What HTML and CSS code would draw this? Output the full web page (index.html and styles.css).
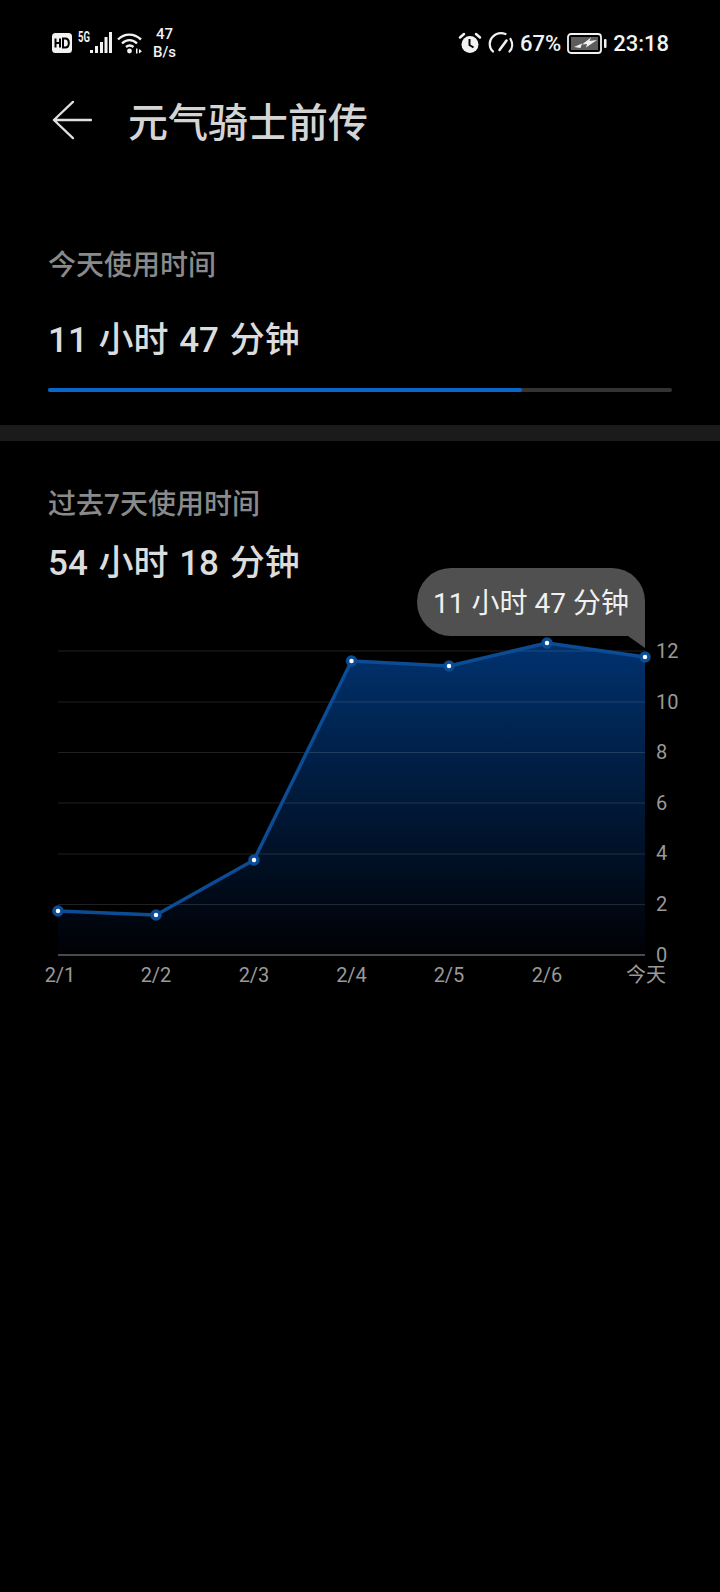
FILE: index.html
```html
<!DOCTYPE html>
<html>
<head>
    <title>元气骑士前传</title>
    <link rel="stylesheet" href="styles.css">
</head>
<body>
    <div class="status-bar">
        <div class="status-left">
            <svg class="icon-hd" width="20" height="20" viewBox="0 0 20 20">
                <rect width="20" height="20" rx="3.5" fill="#f2f2f2"/>
                <path d="M3.5 5.5v9M8 5.5v9M3.5 10H8M11 5.5v9h2.2c2.4 0 3.6-1.8 3.6-4.5s-1.2-4.5-3.6-4.5z" fill="none" stroke="#000" stroke-width="2"/>
            </svg>
            <span class="net-type">5G</span>
            <svg class="icon-signal" width="22" height="22" viewBox="0 0 22 22" fill="#f2f2f2">
                <rect x="0" y="18" width="3" height="3"/>
                <rect x="5" y="14" width="3" height="7"/>
                <rect x="10" y="10" width="3" height="11"/>
                <rect x="14.500" y="5" width="3" height="16"/>
                <rect x="19" y="0" width="3" height="21"/>
            </svg>
            <svg class="icon-wifi" width="26" height="22" viewBox="0 0 26 22">
                <path d="M1 7.500C7.500 1 17 1 24 7.500M5 11.500C9.500 7 15.500 7 20 11.500M9 15c2.500-2 5-2 7.500 0" fill="none" stroke="#f2f2f2" stroke-width="2.400"/>
                <circle cx="12.500" cy="19" r="2.400" fill="#f2f2f2"/>
                <path d="M19 16.500h1.500v5H19zM22 17l3 2.200-3 2.200z" fill="#f2f2f2"/>
            </svg>
            <div class="net-speed">
                <span>47</span>
                <span>B/s</span>
            </div>
        </div>
        <div class="status-right">
            <svg class="icon-alarm" width="24" height="24" viewBox="0 0 24 24">
                <circle cx="12" cy="13.500" r="8.500" fill="#f2f2f2"/>
                <path d="M11.500 8v6l4 2.500" fill="none" stroke="#000" stroke-width="2"/>
                <path d="M2 6.500 6 3M22 6.500 18 3" fill="none" stroke="#f2f2f2" stroke-width="2.500" stroke-linecap="round"/>
            </svg>
            <svg class="icon-gauge" width="26" height="24" viewBox="0 0 26 24" fill="none" stroke="#f2f2f2" stroke-width="2.200" stroke-linecap="round">
                <path d="M5 20.500C1 17 0.500 10 4.500 6 8.500 2 13 1.500 17.500 3"/>
                <path d="M22.500 8C25 12.500 24.500 17.500 21.500 20.500"/>
                <path d="M11.500 19 18.500 9.500" stroke-width="2.600"/>
            </svg>
            <span class="battery-pct">67%</span>
            <svg class="icon-battery" width="40" height="21" viewBox="0 0 40 21">
                <rect x="1" y="1" width="33" height="19" rx="3" fill="none" stroke="#f2f2f2" stroke-width="1.800"/>
                <rect x="4" y="4" width="27" height="13" fill="#5c5c5c"/>
                <path d="M7 14 15 10.500 13.500 15zM15 11.500 24 4.500 22.500 8 30 7 19 14.500 20 11z" fill="#f2f2f2"/>
                <rect x="37" y="6" width="2.500" height="9" rx="1" fill="#f2f2f2"/>
            </svg>
            <span class="clock">23:18</span>
        </div>
    </div>

    <div class="title-bar">
        <svg class="icon-back" width="40" height="40" viewBox="0 0 42 42">
            <path d="M22 2 2 21l20 19M2 21h39" fill="none" stroke="#e0e0e0" stroke-width="2.400" stroke-linecap="round" stroke-linejoin="round"/>
        </svg>
        <h1>元气骑士前传</h1>
    </div>

    <section class="today">
        <p class="label">今天使用时间</p>
        <p class="value">11 小时 47 分钟</p>
        <div class="progress">
            <div class="progress-fill" style="width: 76%"></div>
        </div>
    </section>

    <div class="divider"></div>

    <section class="week">
        <p class="label">过去7天使用时间</p>
        <p class="value">54 小时 18 分钟</p>
    </section>

    <svg class="chart" width="720" height="430" viewBox="0 0 720 430">
        <defs>
            <linearGradient id="area" x1="0" y1="0" x2="0" y2="1">
                <stop offset="0" stop-color="#00326f"/>
                <stop offset="1" stop-color="#000104"/>
            </linearGradient>
        </defs>
        <!-- svg origin is at y=565 on the page -->
        <path d="M58 346 156 350 254 295 351.500 96 449 101 547 78 645 92V390H58z" fill="url(#area)"/>
        <g class="grid">
            <line x1="58" x2="645" y1="86" y2="86"/>
            <line x1="58" x2="645" y1="137" y2="137"/>
            <line x1="58" x2="645" y1="187.500" y2="187.500"/>
            <line x1="58" x2="645" y1="238" y2="238"/>
            <line x1="58" x2="645" y1="289" y2="289"/>
            <line x1="58" x2="645" y1="339.500" y2="339.500"/>
            <line class="baseline" x1="58" x2="645" y1="390" y2="390"/>
        </g>
        <path class="line" d="M58 346 156 350 254 295 351.500 96 449 101 547 78 645 92"/>
        <g class="dots">
            <circle cx="58" cy="346" r="4"/>
            <circle cx="156" cy="350" r="4"/>
            <circle cx="254" cy="295" r="4"/>
            <circle cx="351.500" cy="96" r="4"/>
            <circle cx="449" cy="101" r="4"/>
            <circle cx="547" cy="78" r="4"/>
            <circle cx="645" cy="92" r="4"/>
        </g>
        <g class="y-labels">
            <text x="656" y="93">12</text>
            <text x="656" y="144">10</text>
            <text x="656" y="194">8</text>
            <text x="656" y="245">6</text>
            <text x="656" y="295">4</text>
            <text x="656" y="346">2</text>
            <text x="656" y="397">0</text>
        </g>
        <g class="x-labels">
            <text x="60" y="417">2/1</text>
            <text x="156" y="417">2/2</text>
            <text x="254" y="417">2/3</text>
            <text x="351.500" y="417">2/4</text>
            <text x="449" y="417">2/5</text>
            <text x="547" y="417">2/6</text>
            <text x="646" y="417">今天</text>
        </g>
        <path class="tip" d="M451 3H612a33 33 0 0 1 33 33V83L628 71H451a34 34 0 0 1 0-68z"/>
        <text class="tip-text" x="531" y="48">11 小时 47 分钟</text>
    </svg>
</body>
</html>
```

FILE: styles.css
```css
* {
    box-sizing: border-box;
}
body {
    margin: 0;
    width: 720px;
    height: 1592px;
    overflow: hidden;
    background-color: #000;
    font-family: Roboto, "Noto Sans CJK SC", sans-serif;
}
p, h1 {
    margin: 0;
}
.status-bar {
    display: flex;
    justify-content: space-between;
    align-items: center;
    height: 86px;
    padding: 0 51px 0 52px;
    color: #f2f2f2;
}
.status-left, .status-right {
    display: flex;
    align-items: center;
}
/* the real glyphs are condensed, Roboto has no such cut */
.net-type {
    display: inline-block;
    width: 18px;
    margin: -12px -6px 0 6px;
    font-size: 14px;
    font-weight: 700;
    transform: scaleX(0.68);
    transform-origin: left center;
}
.icon-wifi {
    margin-left: 5px;
}
.net-speed {
    display: flex;
    flex-direction: column;
    align-items: center;
    margin-left: 10px;
    font-size: 15px;
    font-weight: 500;
    line-height: 18px;
}
.icon-gauge {
    margin-left: 6px;
}
.battery-pct {
    margin-left: 6px;
    font-size: 22px;
    font-weight: 500;
}
.icon-battery {
    margin-left: 6px;
}
.clock {
    margin-left: 6px;
    font-size: 22px;
    font-weight: 500;
}
.title-bar {
    display: flex;
    align-items: center;
    height: 72px;
    padding: 0 0 5px 52px;
}
.title-bar h1 {
    margin-left: 36px;
    color: #d4d4d4;
    font-size: 40px;
    font-weight: 500;
}
.today {
    padding: 88px 48px 0;
    height: 267px;
}
.label {
    color: #8a8a8a;
    font-size: 28px;
    font-weight: 500;
    line-height: 40px;
}
.value {
    color: #dcdcdc;
    font-size: 35px;
    font-weight: 500;
    line-height: 48px;
    word-spacing: 2px;
}
.today .value {
    margin-top: 31px;
}
.progress {
    margin-top: 23px;
    width: 624px;
    height: 4px;
    background-color: #333;
    border-radius: 2px;
}
.progress-fill {
    height: 100%;
    background-color: #0a66cc;
    border-radius: 2px;
}
.divider {
    height: 16px;
    background-color: #1b1b1b;
}
.week {
    padding: 44px 48px 0;
    height: 124px;
}
.week .value {
    margin-top: 15px;
}
.chart {
    display: block;
    overflow: visible;
}
.grid line {
    stroke: rgba(255, 255, 255, 0.13);
    stroke-width: 1;
}
.grid .baseline {
    stroke: #4a4a4a;
    stroke-width: 2;
}
.line {
    fill: none;
    stroke: #0b4c94;
    stroke-width: 3.500;
    stroke-linejoin: round;
}
.dots circle {
    fill: #fff;
    stroke: #0b4c94;
    stroke-width: 3.500;
}
.y-labels text, .x-labels text {
    fill: #999;
    font-size: 20px;
}
.x-labels text {
    text-anchor: middle;
}
.tip {
    fill: #505050;
}
.tip-text {
    fill: #f0f0f0;
    font-size: 28px;
    text-anchor: middle;
}
```
